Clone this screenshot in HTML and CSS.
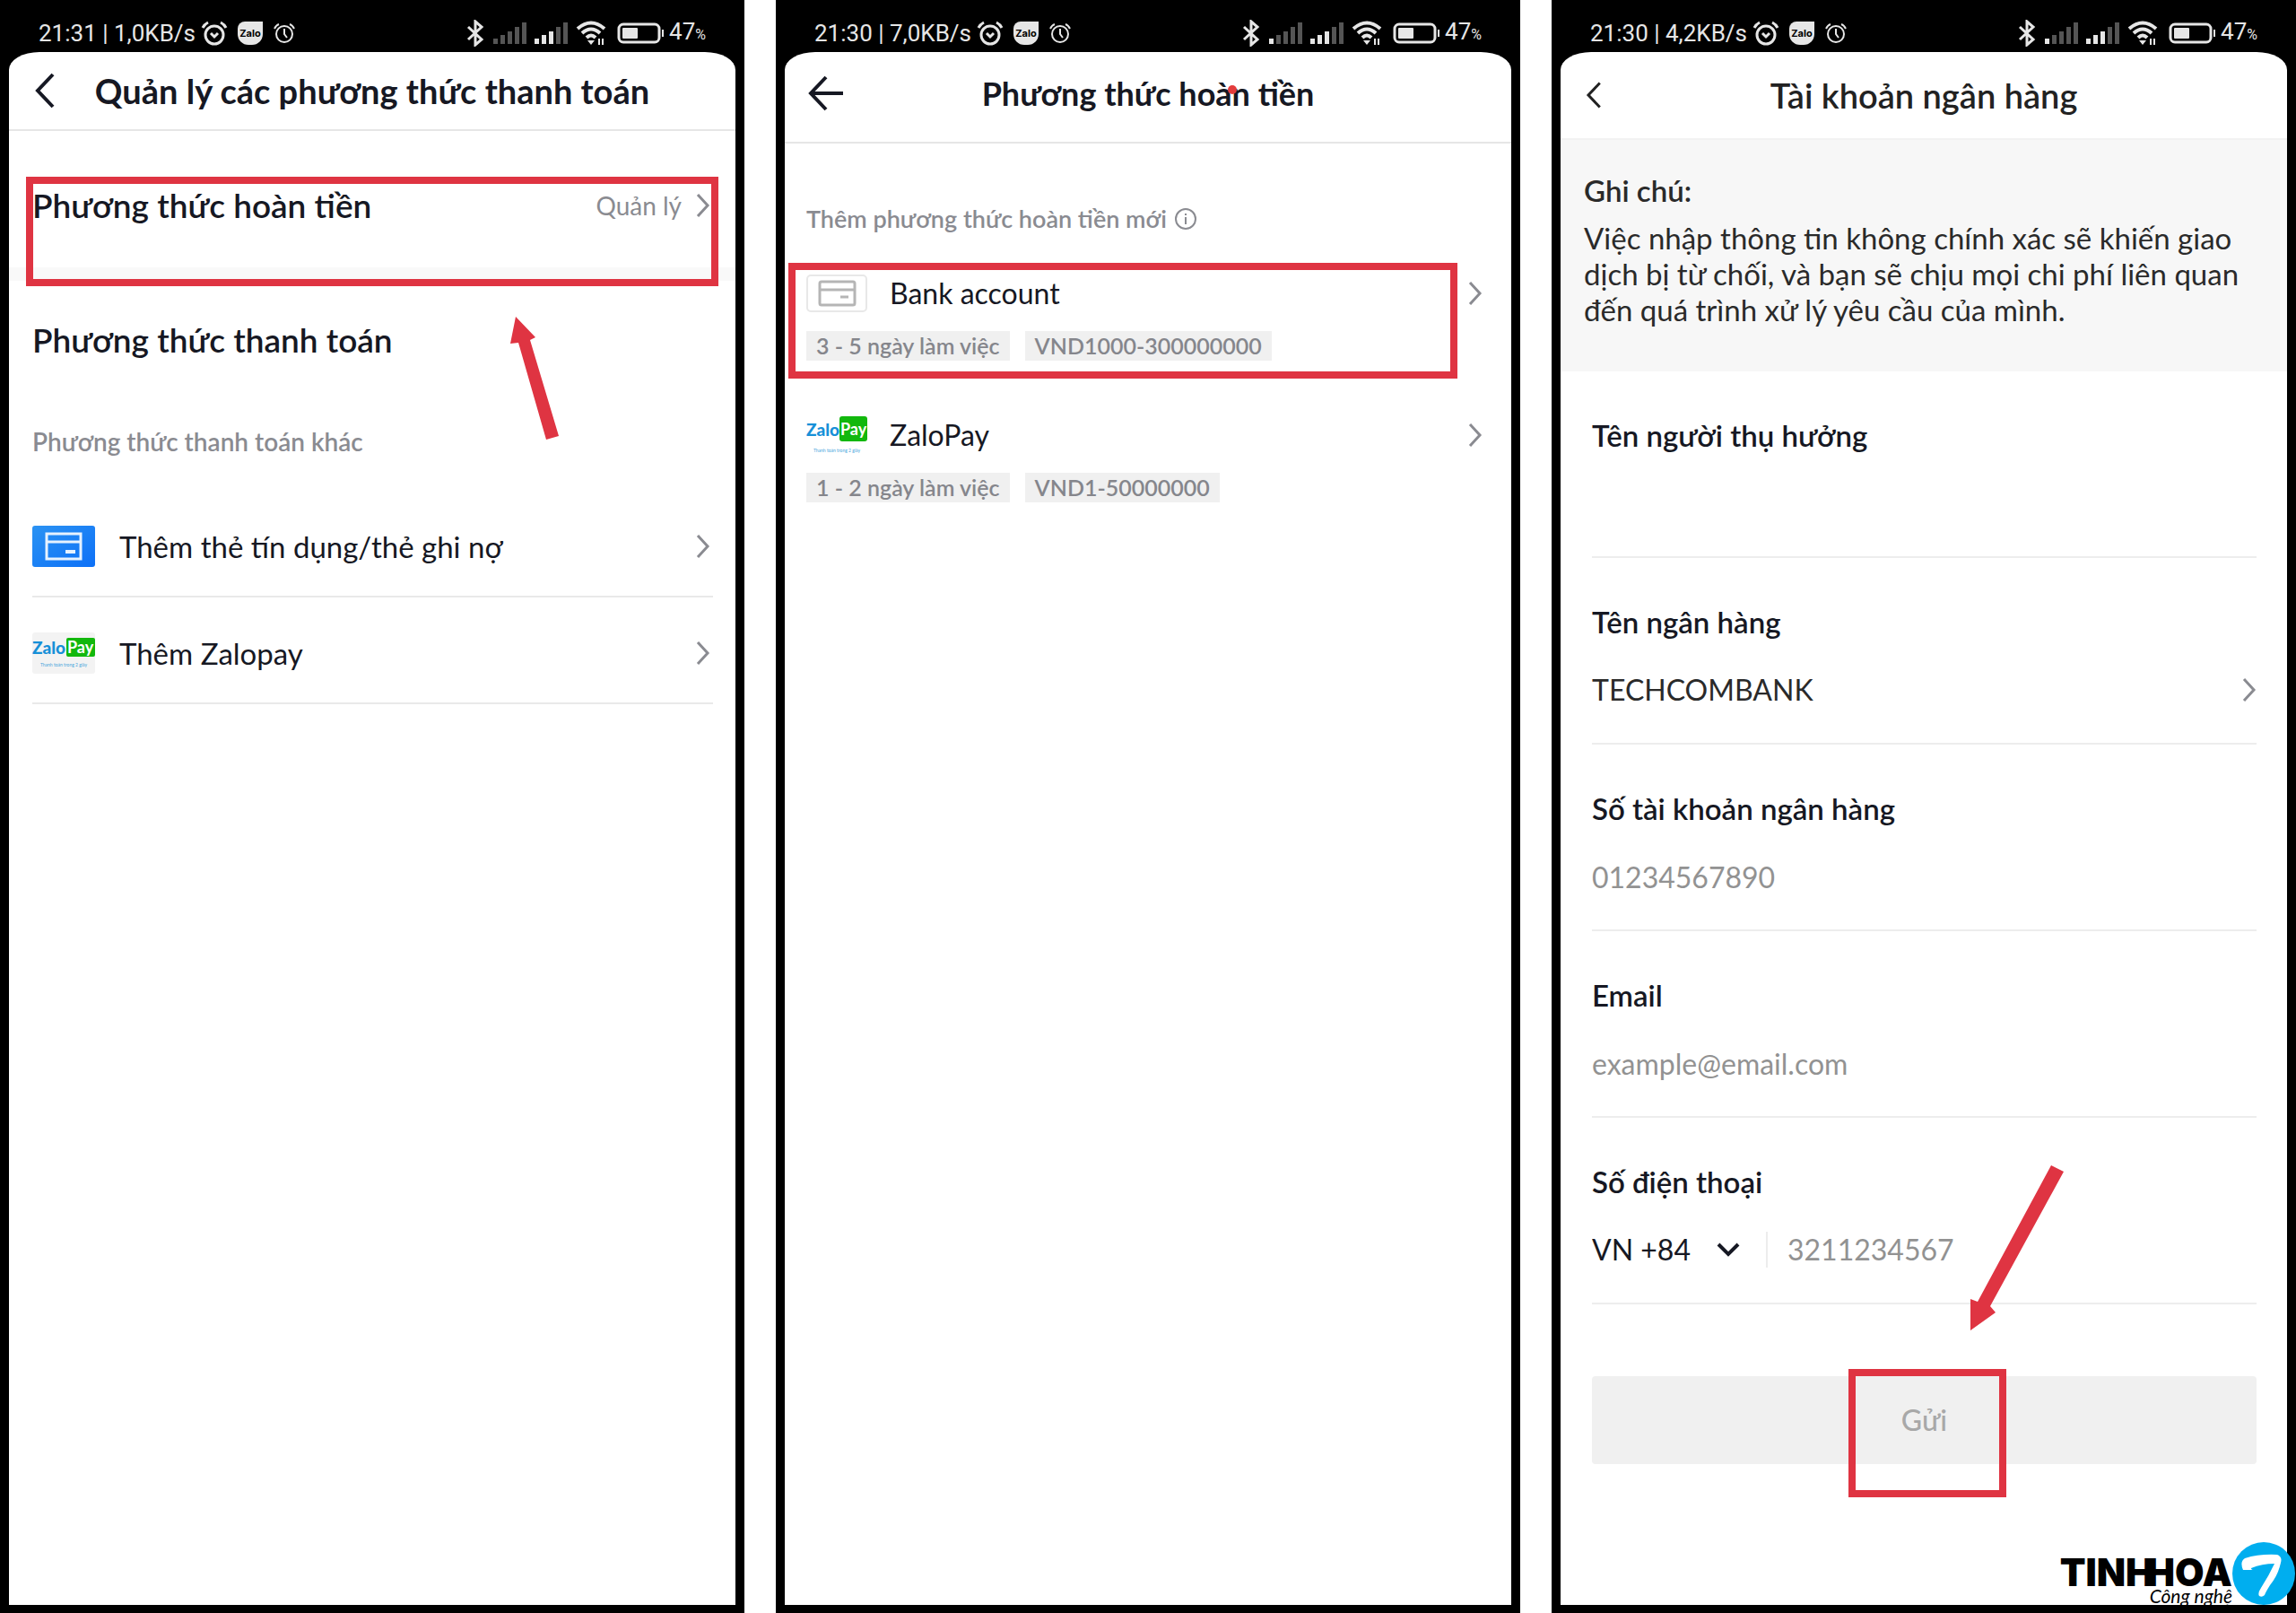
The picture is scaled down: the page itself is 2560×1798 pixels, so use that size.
FILE: index.html
```html
<!DOCTYPE html>
<html lang="vi">
<head>
    <meta charset="UTF-8">
    <meta name="viewport" content="width=device-width, initial-scale=1.0">
    <title>Phương thức hoàn tiền</title>
    <link rel="stylesheet" href="styles.css">
</head>
<body>
    <!-- shared icons -->
    <svg class="sprite" aria-hidden="true">
        <symbol id="alarm-bold" viewBox="0 0 30 28">
            <circle cx="15" cy="16" r="10" fill="none" stroke="currentColor" stroke-width="3"/>
            <path d="M11 14l4 4 4-4M2 8q2-4 6-6M28 8q-2-4-6-6" fill="none" stroke="currentColor" stroke-width="3"/>
        </symbol>
        <symbol id="alarm" viewBox="0 0 24 24">
            <circle cx="12" cy="13" r="9" fill="none" stroke="currentColor" stroke-width="2"/>
            <path d="M12 7v6l3 4M1 7q2-4 5-5M23 7q-2-4-5-5" fill="none" stroke="currentColor" stroke-width="2"/>
        </symbol>
        <symbol id="bluetooth" viewBox="0 0 20 30">
            <path d="M2 8l15 14-7 6V2l7 6L2 22" fill="none" stroke="currentColor" stroke-width="3"/>
        </symbol>
        <symbol id="wifi" viewBox="0 0 36 28">
            <path d="M2 9q15-13 30 0M7 14q10-9 20 0M12 19q5-5 10 0" fill="none" stroke="currentColor" stroke-width="4"/>
            <path d="M13 22h8l-4 5zM25 20h2v7h-2zM29 20h2v7h-2z" fill="currentColor"/>
        </symbol>
        <symbol id="battery" viewBox="0 0 54 24">
            <rect x="2" y="2" width="45" height="20" rx="5" fill="none" stroke="currentColor" stroke-width="3"/>
            <rect x="6" y="6" width="17" height="12" rx="1" fill="currentColor"/>
            <rect x="50" y="8" width="2" height="8" fill="currentColor"/>
        </symbol>
        <symbol id="chevron" viewBox="0 0 16 28">
            <path d="M2 2l11 12L2 26" fill="none" stroke="currentColor" stroke-width="3"/>
        </symbol>
        <symbol id="back" viewBox="0 0 24 40">
            <path d="M21 2L4 20l17 18" fill="none" stroke="currentColor" stroke-width="4"/>
        </symbol>
    </svg>

    <main class="page">
        <section class="phone">
            <div class="status">
                <span>21:31 | 1,0KB/s</span>
                <svg class="i-alarm-bold"><use href="#alarm-bold"/></svg>
                <span class="zalo">Zalo</span>
                <svg class="i-alarm"><use href="#alarm"/></svg>
                <span class="spacer"></span>
                <svg class="i-bt"><use href="#bluetooth"/></svg>
                <span class="signal"><i></i><i></i><i></i><i></i><i></i></span>
                <span class="signal"><i class="on"></i><i class="on"></i><i class="on"></i><i></i><i></i></span>
                <svg class="i-wifi"><use href="#wifi"/></svg>
                <svg class="i-battery"><use href="#battery"/></svg>
                <span class="percent">47<small>%</small></span>
            </div>
            <div class="screen">
                <header class="bar bar-methods">
                    <button class="back" aria-label="Quay lại"><svg class="i-back"><use href="#back"/></svg></button>
                    <h1>Quản lý các phương thức thanh toán</h1>
                </header>
                <div class="refund">
                    <a href="#" class="refund-row">
                        <span class="heading">Phương thức hoàn tiền</span>
                        <span class="manage">Quản lý</span>
                        <svg class="i-chevron"><use href="#chevron"/></svg>
                    </a>
                    <div class="mark"></div>
                    <svg class="arrow-up" viewBox="0 0 56 142"><path d="M7 2L29 25l-6 3L55 135l-14 4L10 31l-9 1z" fill="#df3442"/></svg>
                </div>
                <div class="payment">
                    <h2 class="heading">Phương thức thanh toán</h2>
                    <p class="sub">Phương thức thanh toán khác</p>
                    <a href="#" class="pay-row">
                        <svg class="i-card" viewBox="0 0 70 46">
                            <defs><linearGradient id="blue" x2="1" y2="1"><stop stop-color="#2b93f3"/><stop offset="1" stop-color="#0d70f7"/></linearGradient></defs>
                            <rect width="70" height="46" rx="3" fill="url(#blue)"/>
                            <path d="M16 9h38v28H16zM16 18h38" fill="none" stroke="#e6f2ff" stroke-width="3"/>
                            <rect x="37" y="27" width="11" height="4" fill="#e6f2ff"/>
                        </svg>
                        <span>Thêm thẻ tín dụng/thẻ ghi nợ</span>
                        <svg class="i-chevron"><use href="#chevron"/></svg>
                    </a>
                    <a href="#" class="pay-row">
                        <svg class="i-card" viewBox="0 0 70 46">
                            <rect width="70" height="46" rx="3" fill="#f3f3f3"/>
                            <rect x="38" y="6" width="32" height="21" rx="2" fill="#12b80d"/>
                            <text x="0" y="24" class="zp-zalo">Zalo</text>
                            <text x="39" y="23" class="zp-pay">Pay</text>
                            <text x="35" y="38" text-anchor="middle" class="zp-note">Thanh toán trong 2 giây</text>
                        </svg>
                        <span>Thêm Zalopay</span>
                        <svg class="i-chevron"><use href="#chevron"/></svg>
                    </a>
                </div>
            </div>
        </section>

        <section class="phone">
            <div class="status">
                <span>21:30 | 7,0KB/s</span>
                <svg class="i-alarm-bold"><use href="#alarm-bold"/></svg>
                <span class="zalo">Zalo</span>
                <svg class="i-alarm"><use href="#alarm"/></svg>
                <span class="spacer"></span>
                <svg class="i-bt"><use href="#bluetooth"/></svg>
                <span class="signal"><i class="on"></i><i></i><i></i><i></i><i></i></span>
                <span class="signal"><i class="on"></i><i class="on"></i><i class="on"></i><i></i><i></i></span>
                <svg class="i-wifi"><use href="#wifi"/></svg>
                <svg class="i-battery"><use href="#battery"/></svg>
                <span class="percent">47<small>%</small></span>
            </div>
            <div class="screen">
                <header class="bar bar-refund">
                    <button class="back" aria-label="Quay lại">
                        <svg class="i-arrow" viewBox="0 0 40 40"><path d="M20 2L3 20l17 18M3 20h36" fill="none" stroke="currentColor" stroke-width="4"/></svg>
                    </button>
                    <h1>Phương thức hoàn tiền<span class="dot"></span></h1>
                </header>
                <div class="refund-list">
                    <p class="sub">Thêm phương thức hoàn tiền mới
                        <svg class="i-info" viewBox="0 0 26 26"><circle cx="13" cy="13" r="11" fill="none" stroke="currentColor" stroke-width="2"/><path d="M13 11v8M13 7v2" stroke="currentColor" stroke-width="2"/></svg>
                    </p>
                    <div class="method">
                        <a href="#" class="method-head">
                            <svg class="i-method" viewBox="0 0 68 42">
                                <rect x="1" y="1" width="66" height="40" rx="4" fill="#fff" stroke="#e8e8e8" stroke-width="2"/>
                                <rect x="15" y="8" width="39" height="26" rx="2" fill="none" stroke="#b5b5b5" stroke-width="3"/>
                                <path d="M15 17h39M38 25h9" stroke="#b5b5b5" stroke-width="3"/>
                            </svg>
                            <span>Bank account</span>
                            <svg class="i-chevron"><use href="#chevron"/></svg>
                        </a>
                        <div class="tags"><span>3 - 5 ngày làm việc</span><span>VND1000-300000000</span></div>
                        <div class="mark"></div>
                    </div>
                    <div class="method">
                        <a href="#" class="method-head">
                            <svg class="i-method" viewBox="0 0 68 42">
                                <rect x="37" y="0" width="31" height="28" rx="3" fill="#12b80d"/>
                                <text x="0" y="22" class="zp-zalo">Zalo</text>
                                <text x="38" y="21" class="zp-pay">Pay</text>
                                <text x="34" y="40" text-anchor="middle" class="zp-note">Thanh toán trong 2 giây</text>
                            </svg>
                            <span>ZaloPay</span>
                            <svg class="i-chevron"><use href="#chevron"/></svg>
                        </a>
                        <div class="tags"><span>1 - 2 ngày làm việc</span><span>VND1-50000000</span></div>
                    </div>
                </div>
            </div>
        </section>

        <section class="phone">
            <div class="status">
                <span>21:30 | 4,2KB/s</span>
                <svg class="i-alarm-bold"><use href="#alarm-bold"/></svg>
                <span class="zalo">Zalo</span>
                <svg class="i-alarm"><use href="#alarm"/></svg>
                <span class="spacer"></span>
                <svg class="i-bt"><use href="#bluetooth"/></svg>
                <span class="signal"><i class="on"></i><i></i><i></i><i></i><i></i></span>
                <span class="signal"><i class="on"></i><i class="on"></i><i class="on"></i><i></i><i></i></span>
                <svg class="i-wifi"><use href="#wifi"/></svg>
                <svg class="i-battery"><use href="#battery"/></svg>
                <span class="percent">47<small>%</small></span>
            </div>
            <div class="screen">
                <header class="bar bar-bank">
                    <button class="back" aria-label="Quay lại"><svg class="i-back"><use href="#back"/></svg></button>
                    <h1>Tài khoản ngân hàng</h1>
                </header>
                <div class="note">
                    <h2>Ghi chú:</h2>
                    <p>Việc nhập thông tin không chính xác sẽ khiến giao<br>dịch bị từ chối, và bạn sẽ chịu mọi chi phí liên quan<br>đến quá trình xử lý yêu cầu của mình.</p>
                </div>
                <form class="bank-form">
                    <div class="field">
                        <label for="owner">Tên người thụ hưởng</label>
                        <div class="control"><input type="text" id="owner"></div>
                    </div>
                    <div class="field">
                        <label for="bank">Tên ngân hàng</label>
                        <div class="control">
                            <select id="bank" class="bank"><option>TECHCOMBANK</option></select>
                            <svg class="i-chevron"><use href="#chevron"/></svg>
                        </div>
                    </div>
                    <div class="field">
                        <label for="account">Số tài khoản ngân hàng</label>
                        <div class="control"><input type="text" id="account" placeholder="01234567890"></div>
                    </div>
                    <div class="field">
                        <label for="email">Email</label>
                        <div class="control"><input type="email" id="email" placeholder="example@email.com"></div>
                    </div>
                    <div class="field">
                        <label for="phone">Số điện thoại</label>
                        <div class="control">
                            <select class="code" aria-label="Mã quốc gia"><option>VN +84</option></select>
                            <svg class="i-down" viewBox="0 0 26 18"><path d="M2 3l11 11L24 3" fill="none" stroke="currentColor" stroke-width="4"/></svg>
                            <input type="tel" id="phone" class="tel" placeholder="3211234567">
                        </div>
                    </div>
                    <div class="submit">
                        <button type="button" class="send">Gửi</button>
                        <div class="mark"></div>
                        <svg class="arrow-down" viewBox="0 0 106 184"><path d="M90 0l14 7L22 157l6 7L0 184v-35l8 3z" fill="#df3442"/></svg>
                    </div>
                </form>
            </div>
        </section>

        <div class="logo">
            <div class="logo-words">
                <strong>TINH<span>HOA</span></strong>
                <em>Công nghệ</em>
            </div>
            <svg class="logo-mark" viewBox="0 0 70 70">
                <circle cx="35" cy="35" r="35" fill="#00aeef"/>
                <path d="M12 31q-4-9 2-13 16-5 36-4 6 2 4 9-3 14-12 25-5 8-6 11-3 3-6 1-2-3 2-9 9-14 15-27-14 0-26 5 0 2 3 2z" fill="#fff"/>
            </svg>
        </div>
    </main>
</body>
</html>
```

FILE: styles.css
```css
* {
    box-sizing: border-box;
}

body {
    margin: 0;
    background: #fff;
    color: #161823;
    font-family: Lato, "Noto Sans", sans-serif;
    font-size: 32px;
    line-height: 40px;
}

h1, h2, p {
    margin: 0;
}

a {
    color: inherit;
    text-decoration: none;
}

button, input, select {
    padding: 0;
    border: 0;
    background: none;
    color: inherit;
    font: inherit;
}

svg {
    flex: none;
}

.sprite {
    display: none;
}

.page {
    position: relative;
    display: grid;
    grid-template-columns: repeat(3, 1fr);
    gap: 35px;
    min-height: 100vh;
}

.phone {
    display: flex;
    flex-direction: column;
    padding: 0 10px 9px;
    background: #000;
}

.screen {
    flex: 1;
    background: #fff;
    border-radius: 34px 34px 0 0 / 20px 20px 0 0;
}

/* status bar */
.status {
    display: flex;
    align-items: center;
    height: 58px;
    padding: 15px 33px 0;
    color: #e6e6e6;
    font-family: Roboto, sans-serif;
    font-size: 26px;
    line-height: 32px;
}

.spacer {
    flex: 1;
}

.i-alarm-bold {
    width: 30px;
    height: 28px;
    margin-left: 6px;
}

.zalo {
    width: 28px;
    height: 26px;
    margin-left: 11px;
    border-radius: 8px 0 12px 12px;
    background: #e6e6e6;
    color: #000;
    font: bold 11px/26px Inter, sans-serif;
    text-align: center;
}

.i-alarm {
    width: 24px;
    height: 24px;
    margin-left: 12px;
}

.i-bt {
    width: 20px;
    height: 30px;
    margin-right: 10px;
}

.signal {
    display: flex;
    align-items: flex-end;
    gap: 3px;
    height: 24px;
    margin-right: 9px;
}

.signal i {
    width: 5px;
    height: 6px;
    background: #555;
}

.signal i:nth-child(2) { height: 10px; }
.signal i:nth-child(3) { height: 14px; }
.signal i:nth-child(4) { height: 19px; }
.signal i:nth-child(5) { height: 24px; }

.signal .on {
    background: #e6e6e6;
}

.i-wifi {
    width: 36px;
    height: 28px;
    margin-right: 10px;
}

.i-battery {
    width: 54px;
    height: 24px;
    margin-right: 4px;
}

.percent small {
    font-size: 16px;
}

/* title bars */
.bar {
    position: relative;
    display: flex;
    align-items: center;
    justify-content: center;
    border-bottom: 2px solid #e6e6e6;
}

.bar h1 {
    position: relative;
    font-size: 36px;
    font-weight: 700;
}

.back {
    position: absolute;
    left: 26px;
    display: flex;
}

.i-back {
    width: 28px;
    height: 40px;
}

.i-arrow {
    width: 40px;
    height: 40px;
}

.bar-methods {
    height: 88px;
}

.bar-methods h1 {
    font-size: 38px;
}

.bar-refund {
    height: 102px;
    padding-bottom: 8px;
}

.bar-bank {
    height: 98px;
    border-color: #f2f2f2;
    color: #222;
}

.bar-bank h1 {
    font-size: 38px;
    font-weight: 600;
}

.bar-bank .back {
    left: 23px;
}

.bar-bank .i-back {
    height: 30px;
}

.dot {
    position: absolute;
    top: 11px;
    right: 86px;
    width: 10px;
    height: 10px;
    border-radius: 50%;
    background: #e33c3c;
}

/* red highlight frames */
.mark {
    position: absolute;
    border: 8px solid #df3442;
    pointer-events: none;
}

.heading {
    font-size: 37px;
    font-weight: 600;
}

.sub {
    color: #8a8b91;
    font-size: 28px;
    font-weight: 600;
    line-height: 36px;
}

.i-chevron {
    width: 16px;
    height: 28px;
    margin-left: auto;
    color: #8a8b91;
}

/* payment methods */
.refund {
    position: relative;
    padding: 60px 26px 46px;
    border-bottom: 15px solid #f9f9f9;
}

.refund-row {
    display: flex;
    align-items: center;
    height: 46px;
}

.refund .mark {
    top: 51px;
    right: 19px;
    left: 19px;
    height: 122px;
}

.manage {
    margin-left: auto;
    color: #8a8b91;
    font-size: 28px;
}

.refund .i-chevron {
    margin: 0 2px 0 16px;
}

.arrow-up {
    position: absolute;
    top: 205px;
    left: 558px;
    width: 56px;
    height: 142px;
}

.payment {
    padding: 46px 25px 0 26px;
}

.payment .sub {
    margin: 75px 0 37px;
}

.pay-row {
    display: flex;
    align-items: center;
    height: 119px;
    padding: 6px 3px 0 0;
    border-bottom: 2px solid #e9e9e9;
    font-size: 33px;
}

.i-card {
    width: 70px;
    height: 46px;
    margin-right: 27px;
}

.zp-zalo {
    fill: #1790d8;
    font: 900 19px Lato, sans-serif;
}

.zp-pay {
    fill: #fff;
    font: 700 18px Lato, sans-serif;
}

.zp-note {
    fill: #4aa6dc;
    font: 5px Lato, sans-serif;
}

/* refund methods */
.refund-list {
    padding: 66px 32px 0 24px;
}

.refund-list .sub {
    display: flex;
    align-items: center;
    gap: 8px;
    font-size: 27px;
}

.i-info {
    width: 26px;
    height: 26px;
}

.method {
    position: relative;
    margin: 44px 0 62px;
}

.method-head {
    display: flex;
    align-items: center;
    height: 42px;
}

.i-method {
    width: 68px;
    height: 42px;
    margin-right: 25px;
}

.tags {
    display: flex;
    gap: 17px;
    margin-top: 21px;
    color: #85868c;
    font-size: 25px;
    font-weight: 600;
    line-height: 33px;
}

.tags span {
    padding: 0 11px;
    background: #f0f0f0;
}

.method .mark {
    top: -13px;
    right: 28px;
    left: -20px;
    height: 129px;
}

/* bank account */
.note {
    padding: 36px 26px 49px;
    background: #f7f7f7;
    color: #2a2a2a;
    font-size: 33px;
}

.note h2 {
    margin-bottom: 13px;
    font-size: 33px;
    font-weight: 600;
}

.bank-form {
    padding: 0 34px 0 35px;
}

.field {
    padding: 51px 0 33px;
    border-bottom: 2px solid #ededed;
}

.field label {
    display: block;
    margin-bottom: 30px;
    font-size: 33px;
    font-weight: 600;
}

.control {
    display: flex;
    align-items: center;
    height: 52px;
}

.control input {
    flex: 1;
    min-width: 0;
    height: 52px;
    outline: 0;
}

.control input::placeholder {
    color: #929292;
    opacity: 1;
}

.control select {
    appearance: none;
}

.bank {
    flex: 1;
    color: #2a2a2a;
}

.code {
    width: 139px;
}

.i-down {
    width: 26px;
    height: 18px;
    margin-right: 29px;
}

.control .tel {
    height: 40px;
    padding-left: 22px;
    border-left: 2px solid #ededed;
}

.submit {
    position: relative;
    margin-top: 80px;
}

.send {
    width: 100%;
    height: 98px;
    border-radius: 4px;
    background: #f0f0f0;
    color: #a8a8a8;
    font-weight: 500;
}

.submit .mark {
    top: -8px;
    left: calc(50% - 85px);
    width: 176px;
    height: 143px;
}

.arrow-down {
    position: absolute;
    top: -235px;
    left: calc(50% + 51px);
    width: 106px;
    height: 184px;
}

/* watermark over the last phone */
.logo {
    position: absolute;
    right: 1px;
    bottom: 9px;
    display: flex;
    align-items: flex-end;
    height: 70px;
    color: #000;
}

.logo-words {
    display: flex;
    flex-direction: column;
    align-items: flex-end;
    height: 58px;
}

.logo-words strong {
    font-family: Inter, sans-serif;
    font-size: 42px;
    font-weight: 900;
    line-height: 44px;
}

.logo-words span {
    margin-left: -8px;
}

.logo-words em {
    margin-top: -7px;
    font-size: 21px;
    line-height: 22px;
}

.logo-mark {
    width: 70px;
    height: 70px;
}
```
